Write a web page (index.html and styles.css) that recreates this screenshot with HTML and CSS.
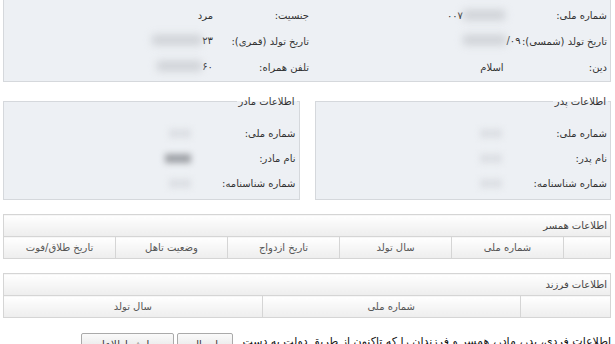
FILE: index.html
```html
<!DOCTYPE html>
<html lang="fa" dir="rtl">
	<head>
		<meta charset="UTF-8">
		<link rel="stylesheet" href="styles.css">
		<title>اطلاعات فردی</title>
	</head>
	<body>
		<div class="page">
			<!-- personal info box, scrolled a little past its top -->
			<div class="infobox">
				<div class="lbl">شماره ملی:</div>
				<div class="val mid"><span class="num shift"><span>۰۰۷</span><span class="smear" style="width:42px"></span></span></div>
				<div></div>
				<div class="lbl">جنسیت:</div>
				<div class="val">مرد</div>

				<div class="lbl">تاریخ تولد (شمسی):</div>
				<div class="val mid"><span class="num"><span class="smear" style="width:43px"></span><span>/۰۹</span></span></div>
				<div></div>
				<div class="lbl">تاریخ تولد (قمری):</div>
				<div class="val"><span class="num"><span class="smear" style="width:50px"></span><span>۲۳</span></span></div>

				<div class="lbl">دین:</div>
				<div class="val mid">اسلام</div>
				<div></div>
				<div class="lbl">تلفن همراه:</div>
				<div class="val"><span class="num"><span class="smear" style="width:45px"></span><span>۶۰</span></span></div>
			</div>

			<div class="parents">
				<fieldset class="parent">
					<legend>اطلاعات پدر</legend>
					<div class="prow"><span class="plbl">شماره ملی:</span><span class="ghost"></span></div>
					<div class="prow"><span class="plbl">نام پدر:</span><span class="ghost"></span></div>
					<div class="prow"><span class="plbl">شماره شناسنامه:</span><span class="ghost"></span></div>
				</fieldset>
				<fieldset class="parent">
					<legend>اطلاعات مادر</legend>
					<div class="prow"><span class="plbl">شماره ملی:</span><span class="ghost"></span></div>
					<div class="prow"><span class="plbl">نام مادر:</span><span class="ghost dark"></span></div>
					<div class="prow"><span class="plbl">شماره شناسنامه:</span><span class="ghost"></span></div>
				</fieldset>
			</div>

			<table class="grid spouse">
				<colgroup>
					<col class="first">
					<col><col><col><col><col>
				</colgroup>
				<tr><th class="title" colspan="6">اطلاعات همسر</th></tr>
				<tr>
					<th></th>
					<th>شماره ملی</th>
					<th>سال تولد</th>
					<th>تاریخ ازدواج</th>
					<th>وضعیت تاهل</th>
					<th>تاریخ طلاق/فوت</th>
				</tr>
			</table>

			<table class="grid child">
				<colgroup>
					<col class="first">
					<col><col>
				</colgroup>
				<tr><th class="title" colspan="3">اطلاعات فرزند</th></tr>
				<tr>
					<th></th>
					<th>شماره ملی</th>
					<th>سال تولد</th>
				</tr>
			</table>

			<div class="footer">
				<p class="note">اطلاعات فردی، پدر، مادر، همسر و فرزندان را که تاکنون از طریق دولت به دست</p>
				<button class="btn send">ارسال</button>
				<button class="btn edit">ویرایش اطلاعات</button>
			</div>
		</div>
	</body>
</html>
```

FILE: styles.css
```css
* {
	box-sizing: border-box;
	font-family: "DejaVu Sans", sans-serif;
}

body {
	margin: 0;
	background: white;
	color: #333;
	font-size: 10px;
	overflow: hidden;
}

.page {
	padding: 0 4px 0 3px;
}

.infobox {
	display: grid;
	grid-template-columns: 83px 70px 145px 90px 1fr;
	grid-auto-rows: 26px;
	align-items: center;
	margin-top: -10px;
	padding: 11px 0 1px;
	background: #edf0f4;
	border: 1px solid #d5d8dc;
}

.lbl {
	padding-right: 3px;
	white-space: nowrap;
}

.val {
	padding-right: 9px;
	white-space: nowrap;
}

.val.mid {
	padding: 0;
	text-align: center;
}

.num {
	display: inline-flex;
	direction: ltr;
	align-items: center;
}

.num.shift {
	margin-right: 22px;
}

.smear {
	display: inline-block;
	height: 10px;
	background: #c6c9ce;
	filter: blur(4px);
	opacity: 0.8;
}

.parents {
	display: flex;
	gap: 15px;
	margin-top: 14px;
}

.parent {
	flex: 1;
	margin: 0;
	padding: 14px 3px 3px 0;
	background: #edf0f4;
	border: 1px solid #d5d8dc;
	min-width: 0;
}

.parent legend {
	padding: 0 2px;
	margin-right: -1px;
	color: #333;
}

.prow {
	display: flex;
	align-items: center;
	height: 25px;
}

.plbl {
	width: 105px;
	white-space: nowrap;
}

.ghost {
	width: 22px;
	height: 9px;
	background: #dcdfe4;
	filter: blur(3px);
}

.ghost.dark {
	width: 26px;
	background: #9da0a5;
}

.grid {
	width: 100%;
	border-collapse: collapse;
	table-layout: fixed;
	margin-top: 14px;
}

.grid th {
	height: 22px;
	padding: 0 3px;
	border: 1px solid #d5d5d5;
	background: linear-gradient(#ffffff, #ededed);
	color: #555;
	font-weight: normal;
	text-align: center;
	white-space: nowrap;
}

.grid th.title {
	text-align: right;
	color: #444;
}

.spouse .first {
	width: 47px;
}

.child .first {
	width: 90px;
}

.footer {
	display: flex;
	align-items: flex-start;
	gap: 3px;
	margin-top: 15px;
}

.note {
	width: 367px;
	margin: 2px 0 0 8px;
	color: #111;
	font-size: 11px;
	white-space: nowrap;
}

.btn {
	height: 22px;
	border: 1px solid #aaa;
	border-radius: 2px;
	background: linear-gradient(#fafafa, #e2e2e2);
	color: #333;
	font-size: 10px;
	white-space: nowrap;
}

.btn.send {
	width: 56px;
	padding: 0;
}

.btn.edit {
	width: 93px;
	padding: 0;
}
```
